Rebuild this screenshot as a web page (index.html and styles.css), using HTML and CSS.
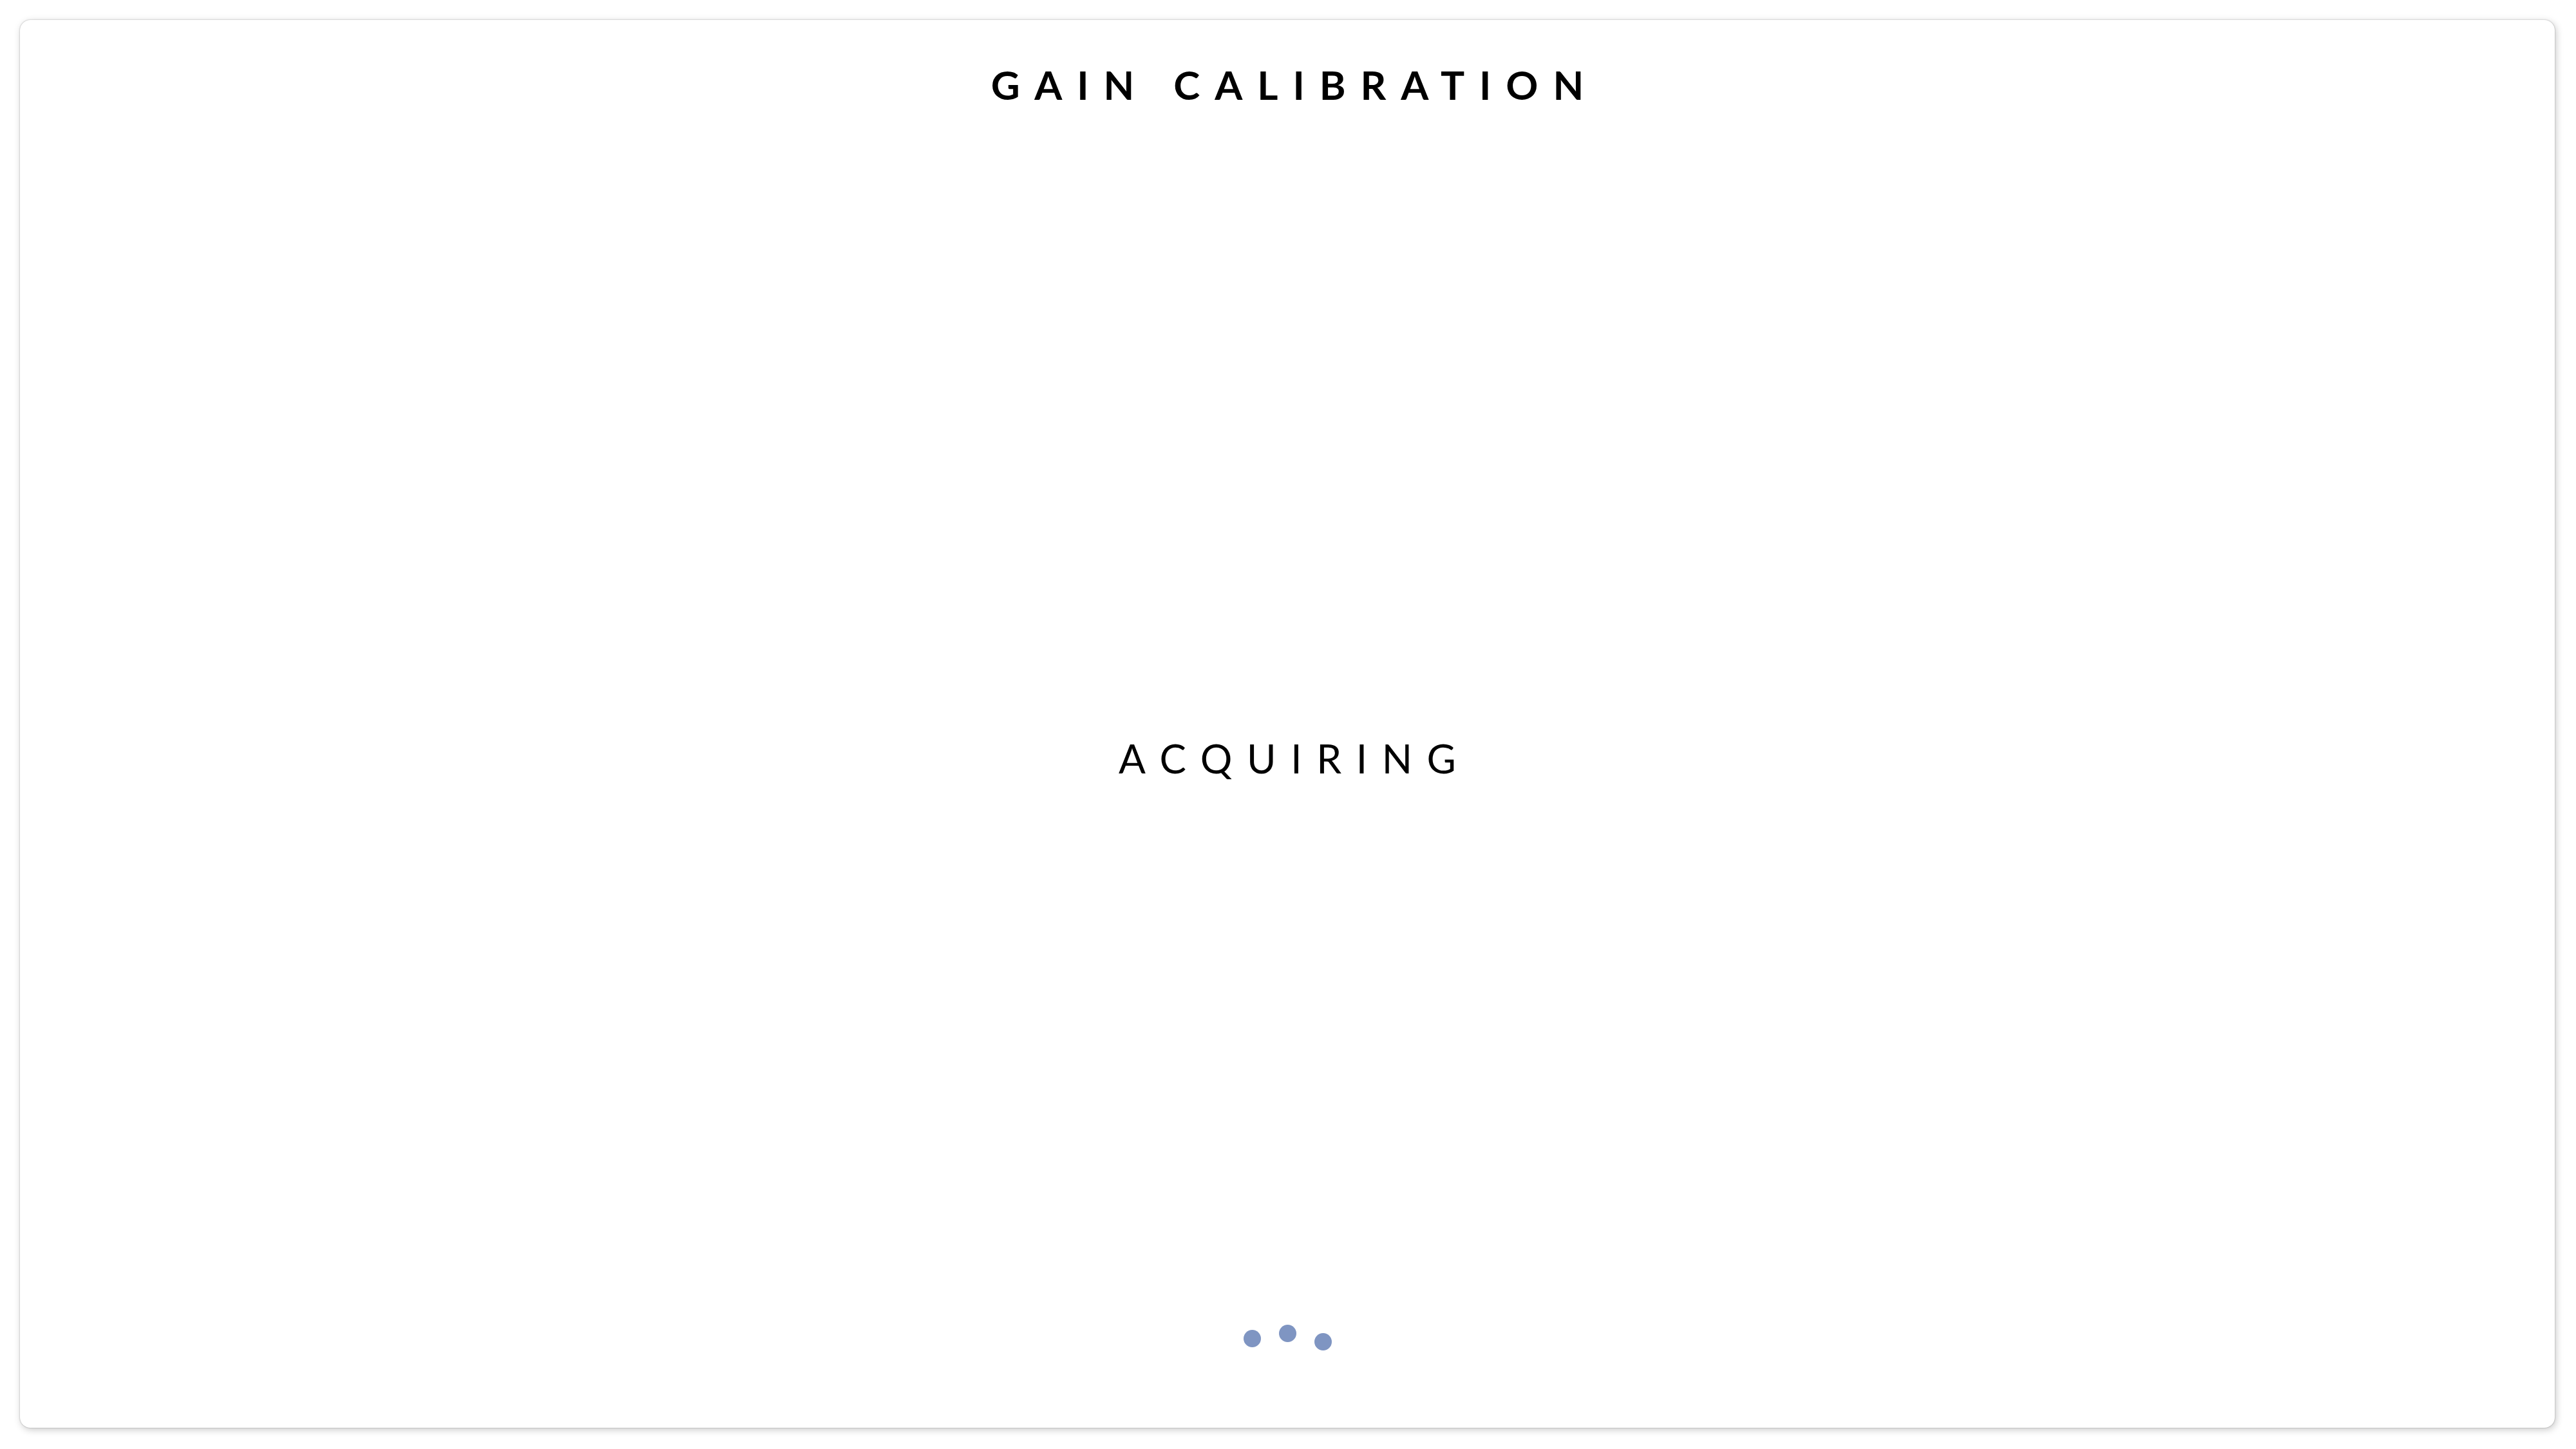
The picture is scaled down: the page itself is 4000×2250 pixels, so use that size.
FILE: index.html
```html
<!DOCTYPE html>
<html lang="en">
<head>
<meta charset="utf-8">
<title>Gain Calibration</title>
<link rel="stylesheet" href="styles.css">
</head>
<body>
<main class="card">
  <header class="card-header">
    <h1 class="title">GAIN CALIBRATION</h1>
  </header>
  <section class="card-body">
    <p class="status">ACQUIRING</p>
  </section>
  <footer class="card-footer">
    <div class="loader">
      <span class="dot dot-1"></span>
      <span class="dot dot-2"></span>
      <span class="dot dot-3"></span>
    </div>
  </footer>
</main>
</body>
</html>
```

FILE: styles.css
```css
html, body {
  margin: 0;
  padding: 0;
  background: #ffffff;
}

body {
  width: 4000px;
  height: 2250px;
  padding: 31px 33px 33px 31px;
  box-sizing: border-box;
  font-family: "Lato", "Liberation Sans", sans-serif;
  color: #000000;
}

.card {
  display: flex;
  flex-direction: column;
  width: 100%;
  height: 100%;
  box-sizing: border-box;
  background: #ffffff;
  border-radius: 16px;
  box-shadow: 0 0 2px rgba(0, 0, 0, 0.35), 2px 3px 12px rgba(0, 0, 0, 0.22);
}

.card-header {
  height: 386px;
  padding-top: 69px;
  box-sizing: border-box;
  display: flex;
  justify-content: center;
}

.title {
  margin: 0;
  font-size: 62px;
  line-height: 1;
  font-weight: 700;
  letter-spacing: 0.37em;
  padding-left: 0.37em;
}

.card-body {
  flex: 1;
  display: flex;
  align-items: center;
  justify-content: center;
}

.status {
  margin: 0;
  font-size: 62px;
  line-height: 1;
  font-weight: 400;
  letter-spacing: 0.365em;
  padding-left: 0.365em;
}

.card-footer {
  height: 280px;
  display: flex;
  align-items: center;
  justify-content: center;
}

.loader {
  display: flex;
  align-items: center;
  gap: 28px;
  height: 40px;
}

.dot {
  width: 27px;
  height: 27px;
  border-radius: 50%;
  background: #7f95c2;
}

.dot-1 { transform: translateY(1px); }
.dot-2 { transform: translateY(-7px); }
.dot-3 { transform: translateY(6px); }
```
